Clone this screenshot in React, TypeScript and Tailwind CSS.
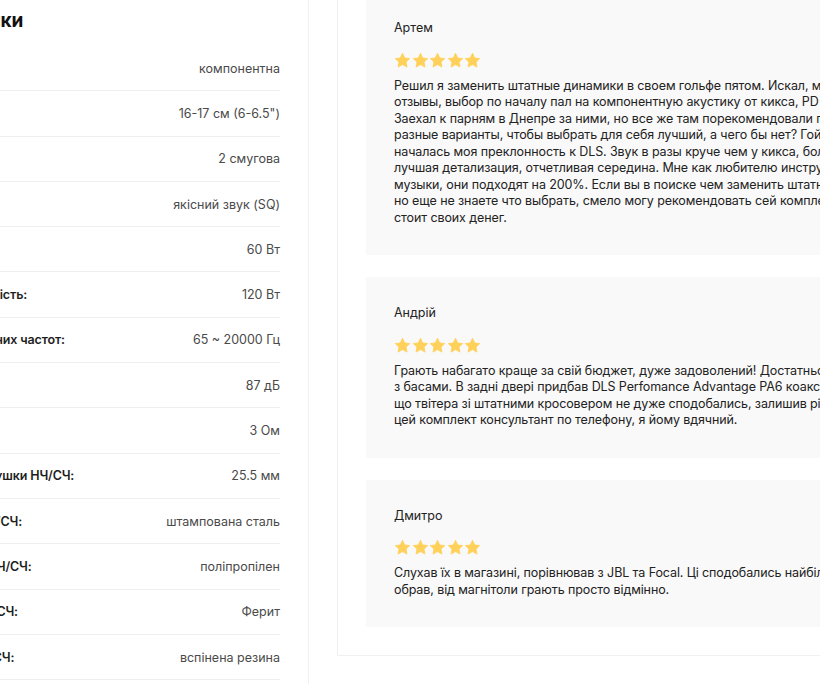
import React from "react";

type Spec = { label: string; value: string };

const specs: Spec[] = [
  { label: "Тип акустики:", value: "компонентна" },
  { label: "Розмір:", value: '16-17 см (6-6.5")' },
  { label: "Кількість смуг:", value: "2 смугова" },
  { label: "Призначення:", value: "якісний звук (SQ)" },
  { label: "Потужність (RMS):", value: "60 Вт" },
  { label: "Максимальна потужність:", value: "120 Вт" },
  { label: "Діапазон відтворюваних частот:", value: "65 ~ 20000 Гц" },
  { label: "Чутливість:", value: "87 дБ" },
  { label: "Опір:", value: "3 Ом" },
  { label: "Діаметр звукової котушки НЧ/СЧ:", value: "25.5 мм" },
  { label: "Матеріал корзини НЧ/СЧ:", value: "штампована сталь" },
  { label: "Матеріал дифузора НЧ/СЧ:", value: "поліпропілен" },
  { label: "Матеріал магніту НЧ/СЧ:", value: "Ферит" },
  { label: "Матеріал підвісу НЧ/СЧ:", value: "вспінена резина" },
];

type Review = { name: string; lines: string[] };

const reviews: Review[] = [
  {
    name: "Артем",
    lines: [
      "Решил я заменить штатные динамики в своем гольфе пятом. Искал, мониторил",
      "отзывы, выбор по началу пал на компонентную акустику от кикса, PD 6.5.",
      "Заехал к парням в Днепре за ними, но все же там порекомендовали послушать",
      "разные варианты, чтобы выбрать для себя лучший, а чего бы нет? Гой, вот так и",
      "началась моя преклонность к DLS. Звук в разы круче чем у кикса, более",
      "лучшая детализация, отчетливая середина. Мне как любителю инструментальной",
      "музыки, они подходят на 200%. Если вы в поиске чем заменить штатные динамики,",
      "но еще не знаете что выбрать, смело могу рекомендовать сей комплект, он",
      "стоит своих денег.",
    ],
  },
  {
    name: "Андрій",
    lines: [
      "Грають набагато краще за свій бюджет, дуже задоволений! Достатньо потужні,",
      "з басами. В задні двері придбав DLS Perfomance Advantage PA6 коаксіальні, так",
      "що твітера зі штатними кросовером не дуже сподобались, залишив рідні. Порадив",
      "цей комплект консультант по телефону, я йому вдячний.",
    ],
  },
  {
    name: "Дмитро",
    lines: [
      "Слухав їх в магазині, порівнював з JBL та Focal. Ці сподобались найбільше, тому і",
      "обрав, від магнітоли грають просто відмінно.",
    ],
  },
];

const Star = () => (
  <svg width="17" height="17" viewBox="0 0 24 24" className="block">
    <path
      d="M12 1.8l3.1 6.6 7.1.9-5.2 4.9 1.3 7.1L12 17.8l-6.3 3.5 1.3-7.1-5.2-4.9 7.1-.9z"
      fill="#FFD15B"
      stroke="#FFD15B"
      strokeWidth="1.2"
      strokeLinejoin="round"
    />
  </svg>
);

export default function App() {
  return (
    <div className="w-full h-[684px] overflow-hidden bg-white font-['Inter',sans-serif] text-[#222]">
      <div className="flex items-start ml-[-163px]">
        {/* specs */}
        <div className="w-[472px] shrink-0 border-r border-[#f0f0f0] px-[28px] pt-[8px] pb-[40px]">
          <h2 className="h-[26px] mb-[12px] text-[19px] leading-[26px] font-bold text-[#111]">
            Характеристики
          </h2>
          {specs.map((s) => (
            <div
              key={s.label}
              className="h-[45.3px] flex items-center justify-between border-b border-[#efefef] text-[12.5px] leading-[17px]"
            >
              <span className="font-semibold text-[#1e1e1e] whitespace-nowrap tracking-[-0.15px]">
                {s.label}
              </span>
              <span className="text-[#4a4a4a] whitespace-nowrap">{s.value}</span>
            </div>
          ))}
        </div>

        {/* reviews */}
        <div className="ml-[28px] mt-[-37px] w-[600px] shrink-0 border border-[#f0f0f0] p-[28px] flex flex-col gap-[22px]">
          {reviews.map((r) => (
            <div key={r.name} className="bg-[#f9f9f9] px-[28px] pt-[26px] pb-[29px]">
              <div className="text-[12.5px] leading-[20px] text-[#222]">{r.name}</div>
              <div className="flex gap-[0.5px] mt-[13.5px] h-[17px]">
                <Star />
                <Star />
                <Star />
                <Star />
                <Star />
              </div>
              <div className="mt-[9px] text-[12.5px] leading-[16.5px] tracking-[-0.1px] text-[#222]">
                {r.lines.map((l, i) => (
                  <div key={i} className="whitespace-nowrap">
                    {l}
                  </div>
                ))}
              </div>
            </div>
          ))}
        </div>
      </div>
    </div>
  );
}
